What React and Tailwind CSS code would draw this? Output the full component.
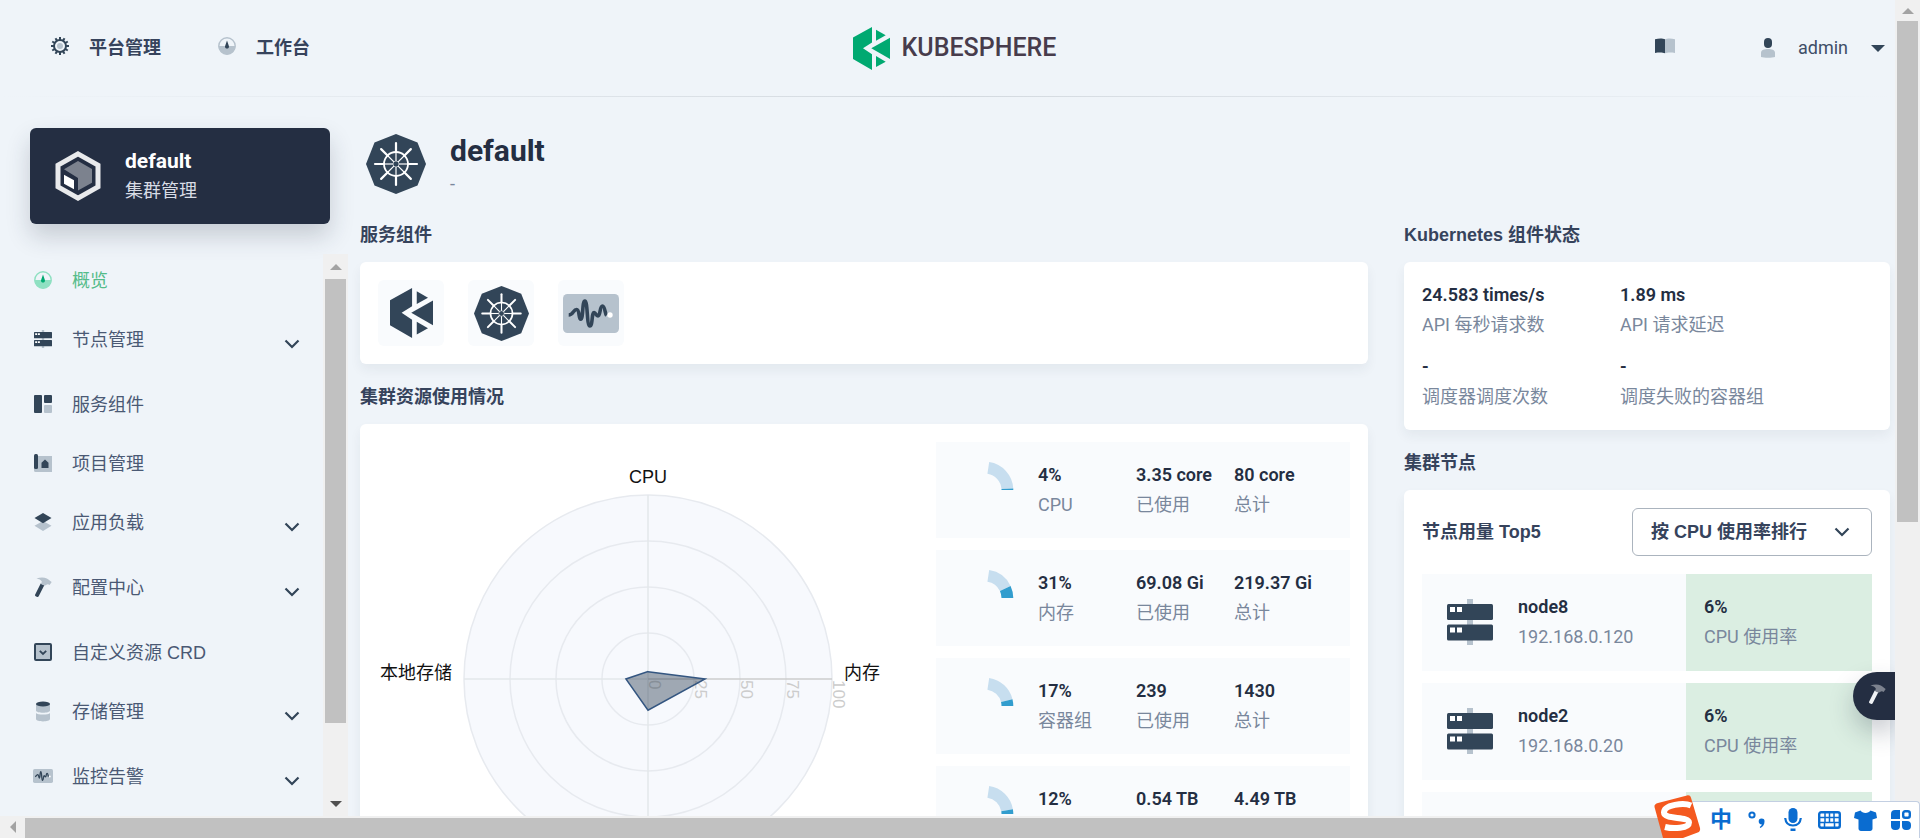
import React from "react";

const DARK = "#324558";
const LIGHT = "#b6c2cd";

/* ---------- icons ---------- */

function GearIcon() {
  const teeth = Array.from({ length: 12 }, (_, i) => i * 30);
  return (
    <svg width="18" height="18" viewBox="0 0 18 18" aria-hidden="true">
      {teeth.map((a) => (
        <rect key={a} x="8" y="0" width="2" height="3" fill={DARK} transform={`rotate(${a} 9 9)`} />
      ))}
      <circle cx="9" cy="9" r="6" fill="none" stroke={DARK} strokeWidth="2" />
      <circle cx="9" cy="9" r="3" fill={LIGHT} />
    </svg>
  );
}

function DashboardIcon({ dark = DARK, light = LIGHT }) {
  return (
    <svg width="18" height="18" viewBox="0 0 18 18" aria-hidden="true">
      <circle cx="9" cy="9" r="8.2" fill="none" stroke={light} strokeWidth="1.4" />
      <path d="M0.5 9h17a8.5 8.5 0 0 1-17 0z" fill={light} />
      <path d="M9 3.5l1.8 5.2a2 2 0 1 1-3.6 0z" fill={dark} />
    </svg>
  );
}

function ServerIcon({ className }) {
  return (
    <svg className={className} viewBox="0 0 46 46" aria-hidden="true">
      <rect x="20" y="0" width="6" height="46" fill={LIGHT} />
      <rect x="0" y="5" width="46" height="16" rx="1.5" fill={DARK} />
      <rect x="0" y="25.5" width="46" height="16" rx="1.5" fill={DARK} />
      <path d="M3 8h5v5H3zM10 8h5v5h-5zM3 28.5h5v5H3zM10 28.5h5v5h-5z" fill="#fff" />
    </svg>
  );
}

function ComponentsIcon() {
  return (
    <svg width="18" height="18" viewBox="0 0 18 18" aria-hidden="true">
      <rect x="0" y="0" width="8" height="18" rx="1" fill={DARK} />
      <rect x="10" y="0" width="8" height="8" rx="1" fill={DARK} />
      <rect x="10" y="10" width="8" height="8" rx="1" fill={LIGHT} />
    </svg>
  );
}

function ProjectIcon() {
  return (
    <svg width="18" height="18" viewBox="0 0 18 18" aria-hidden="true">
      <path d="M4 2h14v16H1.500a1.500 1.500 0 0 1-1.500-1.500V14h4z" fill={LIGHT} />
      <rect x="0" y="0" width="4" height="15" rx="1.5" fill={DARK} />
      <path d="M11 5.500l3.500 3.300V14h-7V8.800z" fill={DARK} />
    </svg>
  );
}

function LayersIcon() {
  return (
    <svg width="18" height="18" viewBox="0 0 18 18" aria-hidden="true">
      <path d="M0.500 12.800L9 8l8.500 4.800L9 18z" fill={LIGHT} />
      <path d="M0.500 5L9 0l8.500 5L9 10.200z" fill={DARK} />
    </svg>
  );
}

function HammerIcon({ dark = DARK, light = LIGHT }) {
  return (
    <svg width="18" height="20" viewBox="0 0 18 20" aria-hidden="true">
      <path d="M6.700 6.500l3.600 1.700-5.600 11c-.4.700-1.200.9-2 .5l-1-.5c-.7-.4-.9-1-.5-1.700z" fill={dark} />
      <path d="M2.500 1.600C6 .2 10 .2 12.800 1.400c1.800.8 2.700 2 4.900 3.600L15.600 8c-1.300-.9-2.300-.8-3.600-.1L10.600 8.800 6.900 7l1-2.300C7 3 5 2.100 2.500 1.600z" fill={light} />
    </svg>
  );
}

function CrdIcon() {
  return (
    <svg width="18" height="18" viewBox="0 0 18 18" aria-hidden="true">
      <rect x="1" y="1" width="16" height="16" rx="1" fill={LIGHT} stroke={DARK} strokeWidth="2" />
      <path d="M5.800 7.800L9 11l3.200-3.200" fill="none" stroke={DARK} strokeWidth="1.800" />
    </svg>
  );
}

function StorageIcon() {
  return (
    <svg width="18" height="21" viewBox="0 0 18 21" aria-hidden="true">
      <path d="M2 3v6.500c0 3 14 3 14 0V3zM2 12v6c0 3.200 14 3.200 14 0v-6c-1.500 2-12.500 2-14 0z" fill={LIGHT} />
      <ellipse cx="9" cy="3" rx="7" ry="2.400" fill={DARK} />
    </svg>
  );
}

function MonitorIcon({ className }) {
  return (
    <svg className={className} viewBox="0 0 56 39" aria-hidden="true">
      <rect width="56" height="39" rx="4.500" fill={LIGHT} />
      <path
        d="M5.700 21c4.500 0 4.500-5.500 8-5.500 3 0 1.800 9.800 4 9.800 2.800 0 1.200-18.300 4.200-18.300s1.700 25 5 25c3 0 1.500-13.500 4.300-13.500 1.600 0 1.800 3.500 3.800 3.500 2.600 0 1.500-10 4.500-10 2.500 0 2.500 8 4 9.500"
        fill="none"
        stroke={DARK}
        strokeWidth="3.600"
      />
      <circle cx="47" cy="21" r="2.700" fill="#fff" />
    </svg>
  );
}

function BookIcon() {
  return (
    <svg width="20" height="16" viewBox="0 0 20 16" aria-hidden="true">
      <path d="M0 1.200C4 0 8 .3 10 1.200v14c-2-.8-6-.9-10-.3z" fill={DARK} />
      <path d="M20 1.200C16 0 12 .3 10 1.200v14c2-.8 6-.9 10-.3z" fill={LIGHT} />
    </svg>
  );
}

function UserIcon() {
  return (
    <svg width="14" height="20" viewBox="0 0 14 20" aria-hidden="true">
      <rect x="3" y="0" width="8" height="10" rx="4" fill={DARK} />
      <path d="M0 19v-4.500C0 12 3.500 11 7 11s7 1 7 3.500V19c-3 1-11 1-14 0z" fill={LIGHT} />
    </svg>
  );
}

function KubeSphereMark({ className }) {
  return (
    <svg className={className} viewBox="0 0 37 43" fill="currentColor" aria-hidden="true">
      <path d="M0 10.600L19 0v15.600l-9 5.700 9 6V43L0 32z" />
      <path d="M23 2.700l9.700 5.600L23 13.700z" />
      <path d="M18.300 21.300L37 10.700V32z" />
      <path d="M23 29l9.700 5.700L23 40z" />
    </svg>
  );
}

function KubernetesIcon({ className }) {
  return (
    <svg className={className} viewBox="0 0 60 60" aria-hidden="true">
      <path d="M30 0l21.500 8.500L60 30l-8.500 21.500L30 60 8.500 51.500 0 30 8.500 8.500z" fill={DARK} />
      <g fill="none" stroke="#fff">
        <circle cx="30" cy="30" r="12" strokeWidth="1.800" />
        {[0, 45, 90, 135, 180, 225, 270, 315].map((a) => (
          <g key={a} transform={`rotate(${a} 30 30)`}>
            <path d="M30 9v9" strokeWidth="2.200" strokeLinecap="round" />
            <path d="M30 18v9" strokeWidth="1.200" />
          </g>
        ))}
        <circle cx="30" cy="30" r="3" strokeWidth="1" strokeOpacity="0.600" />
      </g>
    </svg>
  );
}

function ClusterIcon() {
  return (
    <svg width="46" height="50" viewBox="0 0 46 50" aria-hidden="true">
      <path d="M23 2.900l20 11.200v21.800L23 47.100 3 35.900V14.100z" fill="none" stroke="#e9eaec" strokeWidth="5" />
      <path d="M9 18.300L23 10l14 8v13.800l-14 7.700V27z" fill="#7c828e" />
      <path d="M9 23.700l10 5.600v9L9 32.700z" fill="#fff" />
    </svg>
  );
}

function Chevron() {
  return (
    <svg width="16" height="10" viewBox="0 0 16 10" aria-hidden="true">
      <path d="M1.500 1.500L8 8l6.500-6.500" fill="none" stroke={DARK} strokeWidth="2.200" />
    </svg>
  );
}

/* ---------- scroll bars ---------- */

function VerticalBar({ thumb, cap }) {
  return (
    <div className="flex w-[25px] shrink-0 flex-col items-center bg-[#f0f0f0]" aria-hidden="true">
      <div className={`flex shrink-0 items-center ${cap}`}>
        <svg width="12" height="6" viewBox="0 0 12 6">
          <path d="M0 6l6-6 6 6z" fill="#a3a3a3" />
        </svg>
      </div>
      <div className="flex w-full flex-1 flex-col px-[2px]">
        <div className="bg-[#c1c1c1]" style={{ height: `${thumb}%` }} />
      </div>
      <div className="flex h-6 shrink-0 items-center">
        <svg width="12" height="6" viewBox="0 0 12 6">
          <path d="M0 0l6 6 6-6z" fill="#505050" />
        </svg>
      </div>
    </div>
  );
}

/* ---------- header ---------- */

function Header() {
  return (
    <header>
      <div className="grid h-24 grid-cols-[1fr_auto_1fr] items-center pr-[10px] pl-6">
        <nav className="flex items-center gap-[57px] pl-[27px] font-bold text-[#36435c]">
          <a href="#platform" className="flex items-center gap-5">
            <span className="pb-1"><GearIcon /></span>
            平台管理
          </a>
          <a href="#workbench" className="flex items-center gap-5">
            <span className="pb-1"><DashboardIcon /></span>
            工作台
          </a>
        </nav>
        <a href="#home" className="flex items-center gap-3 text-[#473c4c]">
          <KubeSphereMark className="h-[43px] w-[37px] text-[#00a971]" />
          <span className="text-[25px] leading-10 font-medium">KUBESPHERE</span>
        </a>
        <div className="flex items-center justify-end">
          <a href="#docs" aria-label="文档" className="mr-[86px] pb-1"><BookIcon /></a>
          <button type="button" className="flex items-center gap-[23px] text-[#404e68]">
            <UserIcon />
            <span>admin</span>
            <svg width="14" height="7" viewBox="0 0 14 7" aria-hidden="true">
              <path d="M0 0h14L7 7z" fill={DARK} />
            </svg>
          </button>
        </div>
      </div>
      <div className="h-px bg-linear-to-r from-transparent via-[#d3d9df] to-transparent" />
    </header>
  );
}

/* ---------- sidebar ---------- */

const menu = [
  { label: "概览", icon: <DashboardIcon dark="#00aa72" light="#8fe0c2" />, active: true },
  { label: "节点管理", icon: <ServerIcon className="size-[18px]" />, sub: true },
  { label: "服务组件", icon: <ComponentsIcon /> },
  { label: "项目管理", icon: <ProjectIcon /> },
  { label: "应用负载", icon: <LayersIcon />, sub: true },
  { label: "配置中心", icon: <HammerIcon />, sub: true },
  { label: "自定义资源 CRD", icon: <CrdIcon /> },
  { label: "存储管理", icon: <StorageIcon />, sub: true },
  { label: "监控告警", icon: <MonitorIcon className="h-[14px] w-5 shrink-0" />, sub: true },
];

function MenuItem({ item }) {
  const label = (
    <span className="flex h-[52px] items-center gap-5">
      <span className="flex w-[18px] shrink-0 justify-center pb-[2px]">{item.icon}</span>
      {item.label}
    </span>
  );
  if (item.sub) {
    return (
      <li className="mb-[5px]">
        <button type="button" className="flex h-[60px] w-full items-start justify-between pr-[23px]">
          {label}
          <span className="self-center"><Chevron /></span>
        </button>
      </li>
    );
  }
  return (
    <li className="mb-[7px]">
      <a href="#menu" className={item.active ? "block text-[#55bc8a]" : "block"}>{label}</a>
    </li>
  );
}

function Sidebar() {
  return (
    <aside className="flex w-[348px] shrink-0 flex-col pt-[31px]">
      <div className="mr-[18px] ml-[30px] flex h-24 shrink-0 items-center gap-6 rounded-md bg-[#242e42] pl-[25px] text-white shadow-[0_12px_24px_rgba(36,46,66,0.2)]">
        <ClusterIcon />
        <div>
          <div className="text-[21px] leading-[30px] font-bold">default</div>
          <div className="leading-[30px] text-[#d8dce5]">集群管理</div>
        </div>
      </div>
      <div className="mt-[30px] flex min-h-0 flex-1">
        <ul className="min-w-0 flex-1 overflow-hidden pt-px pl-[34px] font-['Liberation_Sans','Noto_Sans_CJK_SC',sans-serif] text-[#4a5974]">
          {menu.map((item) => (
            <MenuItem key={item.label} item={item} />
          ))}
        </ul>
        <VerticalBar thumb={86.5} cap="h-[25px]" />
      </div>
    </aside>
  );
}

/* ---------- shared pieces ---------- */

function SectionTitle({ children }) {
  return (
    <h2 className="mb-3 font-['Liberation_Sans','Noto_Sans_CJK_SC',sans-serif] leading-[30px] font-bold text-[#36435c]">
      {children}
    </h2>
  );
}

function Card({ className = "", children }) {
  return (
    <section className={`rounded-md bg-white p-[18px] shadow-[0_6px_12px_rgba(36,46,66,0.06)] ${className}`}>
      {children}
    </section>
  );
}

function Stat({ value, label }) {
  return (
    <div className="leading-[30px] whitespace-nowrap">
      <div className="font-semibold text-[#242e42]">{value}</div>
      <div className="text-[#79879c]">{label}</div>
    </div>
  );
}

/* ---------- resource usage ---------- */

const usage = [
  { name: "CPU", pct: 4, used: "3.35 core", total: "80 core" },
  { name: "内存", pct: 31, used: "69.08 Gi", total: "219.37 Gi" },
  { name: "容器组", pct: 17, used: "239", total: "1430" },
  { name: "本地存储", pct: 12, used: "0.54 TB", total: "4.49 TB" },
];

function RadarChart() {
  const cx = 288;
  const cy = 237;
  const r = 184;
  const [cpu, mem, pod, disk] = usage.map((u) => (u.pct / 100) * r);
  const shape = `${cx},${cy - cpu} ${cx + mem},${cy} ${cx},${cy + pod} ${cx - disk},${cy}`;
  return (
    <svg
      width="540"
      height="474"
      viewBox="18 0 540 474"
      className="shrink-0 font-['Liberation_Sans','Noto_Sans_CJK_SC',sans-serif]"
      role="img"
      aria-label="集群资源使用情况"
    >
      <circle cx={cx} cy={cy} r={r} fill="#f7f9fd" />
      {[0.25, 0.5, 0.75, 1].map((k) => (
        <circle key={k} cx={cx} cy={cy} r={r * k} fill="none" stroke="#e7eaef" strokeWidth="1.500" />
      ))}
      <path d={`M${cx} ${cy - r}V${cy + r}M${cx - r} ${cy}H${cx}`} stroke="#e3e7ea" strokeWidth="1.500" />
      {[0, 25, 50, 75, 100].map((t) => (
        <text
          key={t}
          transform={`translate(${cx + (t / 100) * r + 1} ${cy + 1}) rotate(90)`}
          fontSize="17"
          fill="#ccc"
        >
          {t}
        </text>
      ))}
      <path d={`M${cx} ${cy}H${cx + r}`} stroke="#ccc" strokeWidth="1.500" />
      <polygon points={shape} fill="#324558" fillOpacity="0.450" stroke="#345681" strokeWidth="1.500" />
      <g fontSize="18" fill="#111">
        <text x={cx} y="41" textAnchor="middle">CPU</text>
        <text x="484" y="237">内存</text>
        <text x="92" y="237" textAnchor="end">本地存储</text>
      </g>
    </svg>
  );
}

const FULL = 81.5;

function point(radius, deg) {
  const a = (deg * Math.PI) / 180;
  return `${radius * Math.cos(a)} ${28 - radius * Math.sin(a)}`;
}

function sector(from, to) {
  return `M${point(28.3, from)}A28.3 28.3 0 0 0 ${point(28.3, to)}L${point(16.5, to)}A16.5 16.5 0 0 1 ${point(16.5, from)}z`;
}

function UsageRow({ item }) {
  const split = (FULL * item.pct) / 100;
  return (
    <div className="flex items-start bg-[#f9fbfd] py-[18px] pl-[49px]">
      <svg width="29" height="28" viewBox="0 0 29 28" className="mt-[2px] mr-6 shrink-0" aria-hidden="true">
        <path d={sector(split, FULL)} fill="#c7deef" />
        <path d={sector(0, split)} fill="#329dce" />
      </svg>
      <div className="grid grid-cols-[98px_98px_98px]">
        <Stat value={`${item.pct}%`} label={item.name} />
        <Stat value={item.used} label="已使用" />
        <Stat value={item.total} label="总计" />
      </div>
    </div>
  );
}

/* ---------- right column ---------- */

const nodes = [
  { name: "node8", ip: "192.168.0.120", pct: "6%" },
  { name: "node2", ip: "192.168.0.20", pct: "6%" },
  { name: "node3", ip: "192.168.0.30", pct: "5%" },
];

function NodeRow({ node }) {
  return (
    <div className="grid min-h-[97px] grid-cols-[264fr_186fr]">
      <div className="flex items-start gap-[25px] bg-[#f9fbfd] py-[18px] pl-[25px]">
        <ServerIcon className="mt-[7px] size-[46px]" />
        <Stat value={node.name} label={node.ip} />
      </div>
      <div className="bg-[#dbeee2] p-[18px]">
        <Stat value={node.pct} label="CPU 使用率" />
      </div>
    </div>
  );
}

function StatusColumn() {
  return (
    <div className="w-[486px] shrink-0">
      <SectionTitle>Kubernetes 组件状态</SectionTitle>
      <Card className="mb-[18px] grid grid-cols-[198px_1fr] gap-y-3">
        <Stat value="24.583 times/s" label="API 每秒请求数" />
        <Stat value="1.89 ms" label="API 请求延迟" />
        <Stat value="-" label="调度器调度次数" />
        <Stat value="-" label="调度失败的容器组" />
      </Card>
      <SectionTitle>集群节点</SectionTitle>
      <Card>
        <div className="mb-[18px] flex items-center justify-between font-['Liberation_Sans','Noto_Sans_CJK_SC',sans-serif]">
          <label htmlFor="sort" className="font-bold text-[#36435c]">节点用量 Top5</label>
          <div className="relative">
            <select
              id="sort"
              className="h-12 w-60 appearance-none rounded-md border border-[#abb4be] bg-white pl-[18px] font-bold text-[#36435c]"
            >
              <option>按 CPU 使用率排行</option>
            </select>
            <span className="pointer-events-none absolute inset-y-0 right-[22px] flex items-center"><Chevron /></span>
          </div>
        </div>
        <div className="flex flex-col gap-3">
          {nodes.map((n) => (
            <NodeRow key={n.name} node={n} />
          ))}
        </div>
      </Card>
    </div>
  );
}

/* ---------- input method bar ---------- */

function InputMethodBar() {
  return (
    <div className="absolute right-0 bottom-0 grid h-[37px] w-[240px] grid-cols-6 items-center justify-items-center rounded-tr border-t border-r border-[#c3cfe2] bg-white pl-[23px] text-[#0a6cd0]">
      <svg width="50" height="44" viewBox="0 0 50 44" className="absolute bottom-0 left-[-27px]" aria-hidden="true">
        <path d="M5 9L34 1.500c2-.5 3.500.3 4 2.300L47 34c.5 2-.3 4-2.300 4.600L30 44H10L1.500 13c-.5-2 1.300-3.500 3.500-4z" fill="#f4591f" />
        <path d="M38 11.500C31 8.500 11 10.500 11 18.500c0 7.500 25 3.500 25 10 0 6-16 6.500-24 4.500" fill="none" stroke="#fff" strokeWidth="6" />
      </svg>
      <span className="text-[22px] leading-none font-bold">中</span>
      <svg width="20" height="20" viewBox="0 0 20 20" aria-hidden="true">
        <circle cx="5" cy="5" r="2.600" fill="none" stroke="currentColor" strokeWidth="2" />
        <path d="M14.500 8.500a3 3 0 0 1 3 3.300c0 3-1.700 5-4.200 6.200l-.6-1c1.300-.8 2-1.700 2-2.700a2.900 2.900 0 0 1-.2-5.800z" fill="currentColor" />
      </svg>
      <svg width="18" height="24" viewBox="0 0 18 24" aria-hidden="true">
        <rect x="4.500" y="0" width="9" height="15" rx="4.500" fill="currentColor" />
        <path d="M1.200 10c.5 5 3.500 7.500 7.800 7.500s7.300-2.500 7.800-7.500" fill="none" stroke="currentColor" strokeWidth="2.200" />
        <path d="M6.500 20.500h5v2.500h-5z" fill="currentColor" />
      </svg>
      <svg width="23" height="18" viewBox="0 0 23 18" aria-hidden="true">
        <rect x="1.200" y="1.200" width="20.600" height="15.600" rx="2" fill="none" stroke="currentColor" strokeWidth="2.400" />
        <path d="M2 6.500h19M2 11.500h19M7 2v9M11.500 2v9M16 2v9M6.500 12v4M16.500 12v4" stroke="currentColor" strokeWidth="1.500" />
      </svg>
      <svg width="23" height="21" viewBox="0 0 23 21" aria-hidden="true">
        <path d="M6.500 0.500c1.800 3.300 8.200 3.300 10 0l5.500 2 1 5.500-4.500 1.500V18.500c0 1.500-1 2.500-2.500 2.500H7c-1.500 0-2.500-1-2.500-2.500V9.500L0 8l1-5.500z" fill="currentColor" />
      </svg>
      <svg width="20" height="20" viewBox="0 0 20 20" fill="currentColor" aria-hidden="true">
        <path d="M4 0h5v9H0V4a4 4 0 0 1 4-4zM0 11h9v5a4 4 0 0 1-4 4H4a4 4 0 0 1-4-4zM11 11h5a4 4 0 0 1 4 4v1a4 4 0 0 1-4 4h-1a4 4 0 0 1-4-4z" />
        <rect x="12.200" y="1.200" width="6.600" height="6.600" rx="2" fill="none" stroke="currentColor" strokeWidth="2.400" />
      </svg>
    </div>
  );
}

/* ---------- page ---------- */

const services = [
  { name: "KubeSphere", icon: <KubeSphereMark className="h-[50px] w-[43px] text-[#324558]" /> },
  { name: "Kubernetes", icon: <KubernetesIcon className="size-[55px]" /> },
  { name: "监控", icon: <MonitorIcon className="h-[39px] w-14" /> },
];

export default function App() {
  return (
    <div className="relative flex h-screen flex-col overflow-hidden bg-[#eff4f9] font-['Roboto','Noto_Sans_CJK_SC',sans-serif] text-[18px] leading-[30px]">
      <div className="flex min-h-0 flex-1">
        <div className="relative flex min-w-0 flex-1 flex-col overflow-hidden">
          <Header />
          <div className="flex min-h-0 flex-1">
            <Sidebar />
            <main className="min-w-0 flex-1 overflow-hidden pt-9 pr-[5px] pl-3">
              <div className="mb-[26px] flex h-[61px] gap-6 pl-[6px]">
                <KubernetesIcon className="mt-px size-[60px]" />
                <div>
                  <h1 className="text-[30px] leading-9 font-bold text-[#242e42]">default</h1>
                  <p className="text-[#79879c]">-</p>
                </div>
              </div>
              <div className="flex items-start gap-9">
                <div className="min-w-0 flex-1">
                  <SectionTitle>服务组件</SectionTitle>
                  <Card className="mb-[18px] flex gap-6">
                    {services.map((s) => (
                      <button
                        key={s.name}
                        type="button"
                        aria-label={s.name}
                        className="flex size-[66px] items-center justify-center rounded-md bg-[#f9fbfd]"
                      >
                        {s.icon}
                      </button>
                    ))}
                  </Card>
                  <SectionTitle>集群资源使用情况</SectionTitle>
                  <Card className="flex justify-between">
                    <RadarChart />
                    <div className="flex w-[414px] flex-col gap-3">
                      {usage.map((u) => (
                        <UsageRow key={u.name} item={u} />
                      ))}
                    </div>
                  </Card>
                </div>
                <StatusColumn />
              </div>
            </main>
          </div>
          <button
            type="button"
            aria-label="工具箱"
            className="absolute right-0 bottom-24 flex h-12 w-[42px] items-center rounded-l-full bg-[#242e42] pl-[15px] shadow-[0_12px_24px_rgba(36,46,66,0.25)]"
          >
            <span className="pb-1"><HammerIcon dark="#f0f2f5" light="#7c828e" /></span>
          </button>
        </div>
        <VerticalBar thumb={65} cap="h-[21px]" />
      </div>
      <div className="flex h-[22px] shrink-0 items-center bg-[#f0f0f0]" aria-hidden="true">
        <div className="flex w-[25px] justify-center">
          <svg width="6" height="12" viewBox="0 0 6 12">
            <path d="M6 0L0 6l6 6z" fill="#a3a3a3" />
          </svg>
        </div>
        <div className="mt-[2px] h-5 flex-1 bg-[#c1c1c1]" />
      </div>
      <InputMethodBar />
    </div>
  );
}
